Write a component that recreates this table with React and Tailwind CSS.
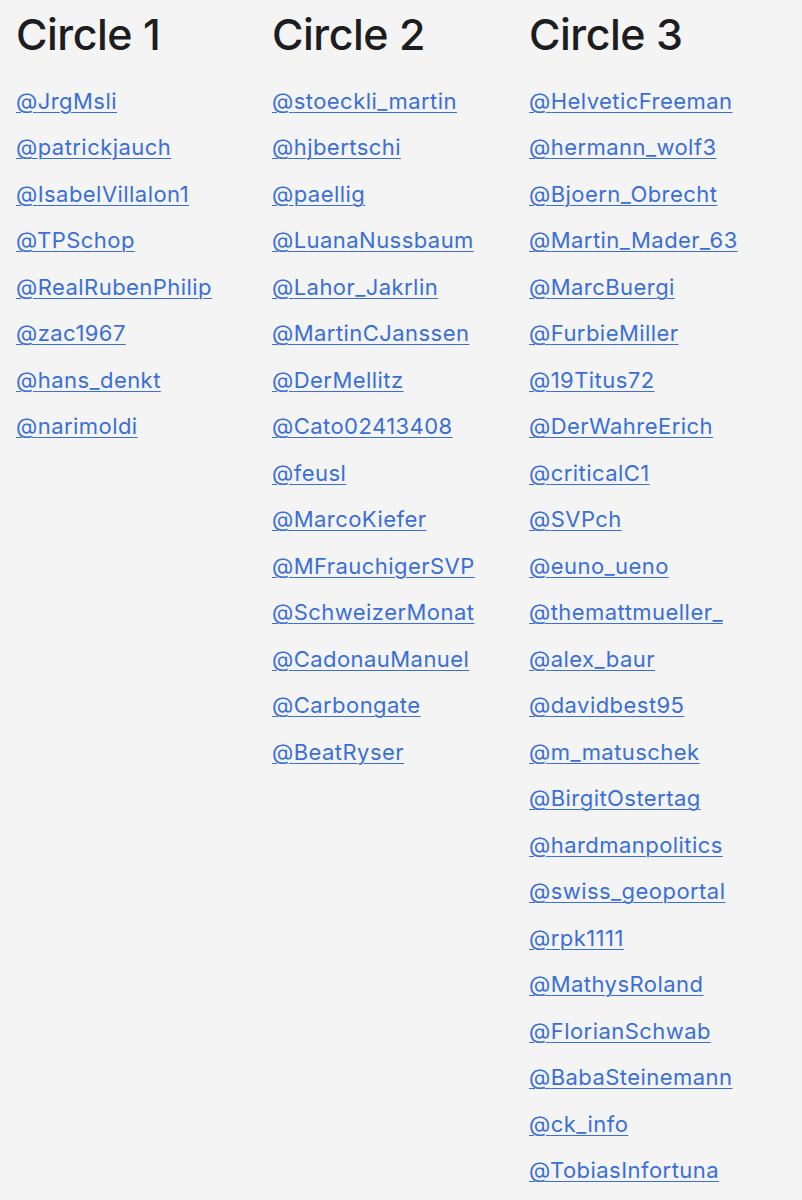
import React from "react";

const cols = [
  {
    title: "Circle 1",
    items: ["JrgMsli", "patrickjauch", "IsabelVillalon1", "TPSchop", "RealRubenPhilip", "zac1967", "hans_denkt", "narimoldi"],
  },
  {
    title: "Circle 2",
    items: ["stoeckli_martin", "hjbertschi", "paellig", "LuanaNussbaum", "Lahor_Jakrlin", "MartinCJanssen", "DerMellitz", "Cato02413408", "feusl", "MarcoKiefer", "MFrauchigerSVP", "SchweizerMonat", "CadonauManuel", "Carbongate", "BeatRyser"],
  },
  {
    title: "Circle 3",
    items: ["HelveticFreeman", "hermann_wolf3", "Bjoern_Obrecht", "Martin_Mader_63", "MarcBuergi", "FurbieMiller", "19Titus72", "DerWahreErich", "criticalC1", "SVPch", "euno_ueno", "themattmueller_", "alex_baur", "davidbest95", "m_matuschek", "BirgitOstertag", "hardmanpolitics", "swiss_geoportal", "rpk1111", "MathysRoland", "FlorianSchwab", "BabaSteinemann", "ck_info", "TobiasInfortuna"],
  },
];

export default function App() {
  return (
    <div className="min-h-[1200px] bg-[#f4f4f4] pl-4 pt-2 font-['Inter','Liberation_Sans',sans-serif]">
      <div className="grid grid-cols-[256px_257px_1fr]">
        {cols.map((c) => (
          <div key={c.title}>
            <h2 className="text-[43px] leading-[53px] font-medium tracking-[-0.5px] text-[#1d1d1f]">{c.title}</h2>
            <ul className="mt-[17px]">
              {c.items.map((it) => (
                <li key={it} className="h-[46.5px] flex items-center">
                  <a href="#" className="text-[22px] tracking-[0.45px] text-[#3a6fd8] underline underline-offset-[3px] decoration-1">
                    @{it}
                  </a>
                </li>
              ))}
            </ul>
          </div>
        ))}
      </div>
    </div>
  );
}
